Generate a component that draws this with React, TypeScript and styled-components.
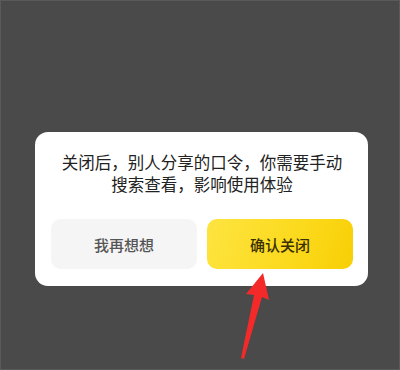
import * as React from 'react';
import styled, {createGlobalStyle} from 'styled-components';

const GlobalStyle = createGlobalStyle`
  html, body {
    margin: 0;
    padding: 0;
    background: #4a4a4a;
  }
  body {
    font-family: "Noto Sans CJK SC", "Noto Sans", sans-serif;
  }
`;

const Screen = styled.div`
  position: relative;
  width: 400px;
  height: 370px;
  box-sizing: border-box;
  border: 1px solid #5a5a5a;
  background: #4a4a4a;
  padding: 131px 0 0 34px;
  overflow: hidden;
`;

const Dialog = styled.div`
  width: 333px;
  height: 154px;
  box-sizing: border-box;
  background: #fff;
  border-radius: 13px;
  padding: 19px 15px 16px 16px;
  display: flex;
  flex-direction: column;
`;

const Message = styled.p`
  margin: 0 0 24px;
  font-size: 16.5px;
  line-height: 22px;
  color: #222;
  text-align: center;
`;

const Actions = styled.div`
  display: flex;
  gap: 10px;
`;

const Button = styled.button<{$primary?: boolean}>`
  flex: 1;
  height: 50px;
  border: none;
  border-radius: 10px;
  font-family: inherit;
  font-size: 15px;
  font-weight: 500;
  color: ${p => (p.$primary ? '#3a3000' : '#555')};
  background: ${p =>
    p.$primary ? 'linear-gradient(110deg, #fde440 0%, #fbd91c 60%, #f8cf05 100%)' : '#f5f5f5'};
`;

const Arrow = styled.svg`
  position: absolute;
  left: 0;
  top: 0;
`;

export default function App() {
  return (
    <>
      <GlobalStyle />
      <Screen>
        <Dialog>
          <Message>
            关闭后，别人分享的口令，你需要手动
            <br />
            搜索查看，影响使用体验
          </Message>
          <Actions>
            <Button>我再想想</Button>
            <Button $primary>确认关闭</Button>
          </Actions>
        </Dialog>
        <Arrow width="400" height="370" viewBox="0 0 400 370">
          <polygon
            points="262,272 268,299 261,296 243,358 240,357 253,294 245,293"
            fill="#f42a2a"
          />
        </Arrow>
      </Screen>
    </>
  );
}
